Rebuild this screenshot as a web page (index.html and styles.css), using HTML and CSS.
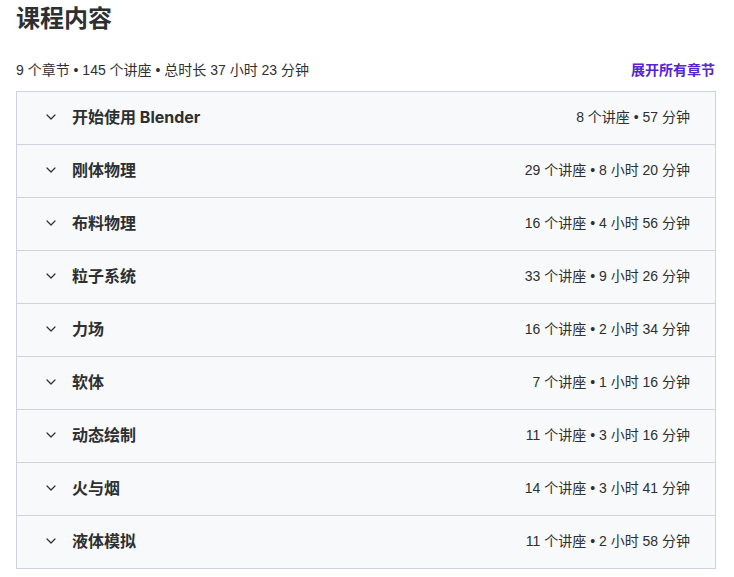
FILE: index.html
```html
<!DOCTYPE html>
<html lang="zh">
<head>
<meta charset="utf-8">
<link rel="stylesheet" href="styles.css">
</head>
<body>
<div class="page">
  <h2 class="title">课程内容</h2>
  <div class="meta">
    <span class="summary">9 个章节 • 145 个讲座 • 总时长 37 小时 23 分钟</span>
    <span class="expand">展开所有章节</span>
  </div>
  <div class="sections">
    <div class="row"><span class="chev"><svg viewBox="0 0 12 12" width="12" height="12"><path d="M2 4 L6 8 L10 4" fill="none" stroke="#2d2f31" stroke-width="1.2" stroke-linecap="round" stroke-linejoin="round"/></svg></span><span class="name">开始使用 Blender</span><span class="info">8 个讲座 • 57 分钟</span></div>
    <div class="row"><span class="chev"><svg viewBox="0 0 12 12" width="12" height="12"><path d="M2 4 L6 8 L10 4" fill="none" stroke="#2d2f31" stroke-width="1.2" stroke-linecap="round" stroke-linejoin="round"/></svg></span><span class="name">刚体物理</span><span class="info">29 个讲座 • 8 小时 20 分钟</span></div>
    <div class="row"><span class="chev"><svg viewBox="0 0 12 12" width="12" height="12"><path d="M2 4 L6 8 L10 4" fill="none" stroke="#2d2f31" stroke-width="1.2" stroke-linecap="round" stroke-linejoin="round"/></svg></span><span class="name">布料物理</span><span class="info">16 个讲座 • 4 小时 56 分钟</span></div>
    <div class="row"><span class="chev"><svg viewBox="0 0 12 12" width="12" height="12"><path d="M2 4 L6 8 L10 4" fill="none" stroke="#2d2f31" stroke-width="1.2" stroke-linecap="round" stroke-linejoin="round"/></svg></span><span class="name">粒子系统</span><span class="info">33 个讲座 • 9 小时 26 分钟</span></div>
    <div class="row"><span class="chev"><svg viewBox="0 0 12 12" width="12" height="12"><path d="M2 4 L6 8 L10 4" fill="none" stroke="#2d2f31" stroke-width="1.2" stroke-linecap="round" stroke-linejoin="round"/></svg></span><span class="name">力场</span><span class="info">16 个讲座 • 2 小时 34 分钟</span></div>
    <div class="row"><span class="chev"><svg viewBox="0 0 12 12" width="12" height="12"><path d="M2 4 L6 8 L10 4" fill="none" stroke="#2d2f31" stroke-width="1.2" stroke-linecap="round" stroke-linejoin="round"/></svg></span><span class="name">软体</span><span class="info">7 个讲座 • 1 小时 16 分钟</span></div>
    <div class="row"><span class="chev"><svg viewBox="0 0 12 12" width="12" height="12"><path d="M2 4 L6 8 L10 4" fill="none" stroke="#2d2f31" stroke-width="1.2" stroke-linecap="round" stroke-linejoin="round"/></svg></span><span class="name">动态绘制</span><span class="info">11 个讲座 • 3 小时 16 分钟</span></div>
    <div class="row"><span class="chev"><svg viewBox="0 0 12 12" width="12" height="12"><path d="M2 4 L6 8 L10 4" fill="none" stroke="#2d2f31" stroke-width="1.2" stroke-linecap="round" stroke-linejoin="round"/></svg></span><span class="name">火与烟</span><span class="info">14 个讲座 • 3 小时 41 分钟</span></div>
    <div class="row"><span class="chev"><svg viewBox="0 0 12 12" width="12" height="12"><path d="M2 4 L6 8 L10 4" fill="none" stroke="#2d2f31" stroke-width="1.2" stroke-linecap="round" stroke-linejoin="round"/></svg></span><span class="name">液体模拟</span><span class="info">11 个讲座 • 2 小时 58 分钟</span></div>
  </div>
</div>
</body>
</html>
```
FILE: styles.css
```css
html, body {
  margin: 0;
  padding: 0;
  background: #ffffff;
}
body {
  font-family: "Liberation Sans", "Noto Sans CJK SC", sans-serif;
  color: #2d2f31;
}
.page {
  width: 700px;
  padding: 0 16px;
}
.title {
  margin: 0;
  padding-top: 3px;
  font-size: 24px;
  line-height: 32px;
  font-weight: 700;
  color: #2d2f31;
}
.meta {
  display: flex;
  justify-content: space-between;
  align-items: center;
  margin-top: 21px;
  height: 26px;
  font-size: 14px;
}
.summary {
  color: #2d2f31;
}
.expand {
  color: #5624d0;
  font-weight: 700;
  margin-right: 1px;
}
.sections {
  margin-top: 9px;
  border: 1px solid #d1d2e0;
  border-bottom: none;
  background: #f7f9fa;
}
.row {
  display: flex;
  align-items: center;
  height: 48px;
  padding: 0 25px 4px 28px;
  border-bottom: 1px solid #d1d2e0;
}
.chev {
  display: flex;
  width: 12px;
  height: 12px;
  margin-right: 15px;
  position: relative;
  top: 1px;
}
.name {
  flex: 1;
  font-family: Inter, "Noto Sans CJK SC", sans-serif;
  font-size: 16px;
  font-weight: 700;
  color: #2d2f31;
}
.info {
  font-size: 14px;
  color: #2d2f31;
}
```
